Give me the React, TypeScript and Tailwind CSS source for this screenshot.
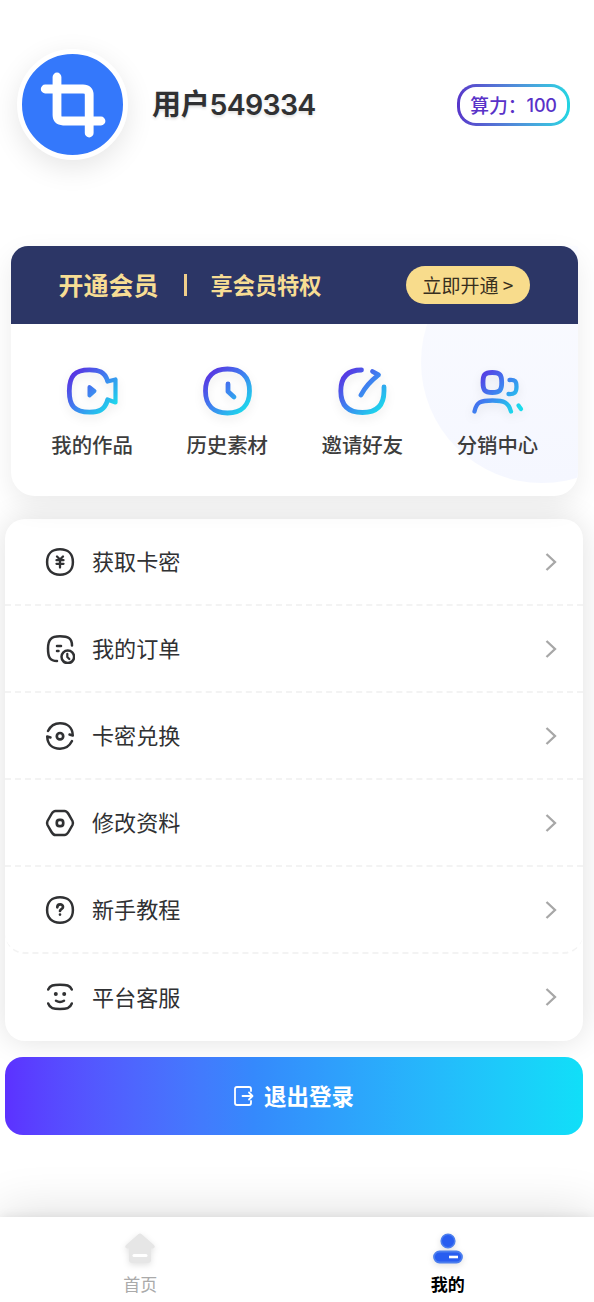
import type { ReactNode } from "react";

const cjk = "font-['Noto_Sans_CJK_SC',sans-serif]";

function Gradient({ id }: { id: string }) {
  return (
    <defs>
      <linearGradient id={id} gradientUnits="userSpaceOnUse" x1="6" y1="6" x2="46" y2="46">
        <stop offset="0" stopColor="#5b2be0" />
        <stop offset="0.5" stopColor="#3f80f0" />
        <stop offset="1" stopColor="#1bdcec" />
      </linearGradient>
    </defs>
  );
}

function FeatureIcon({ id, children }: { id: string; children: ReactNode }) {
  return (
    <svg
      className="h-[52px] w-[54px] drop-shadow-[0_4px_5px_rgba(0,0,0,0.08)]"
      viewBox="0 0 54 52"
      fill="none"
      stroke={`url(#${id})`}
      strokeWidth="4.8"
      strokeLinecap="round"
      strokeLinejoin="round"
    >
      <Gradient id={id} />
      {children}
    </svg>
  );
}

const features = [
  {
    label: "我的作品",
    icon: (
      <FeatureIcon id="g-video">
        <path d="M42.500 15.500C39.500 7 34 4.800 24.500 4.800C9.500 4.800 4.300 11 4.300 26C4.300 41 9.500 47.200 24.500 47.200C34 47.200 39.500 45 42.500 35.500" />
        <path d="M42.500 16.500L50.500 14.500V37.500L42.500 34.500" strokeWidth="4.200" />
        <path d="M24.500 22L29.500 26L24.500 30.500Z" fill="url(#g-video)" strokeWidth="4" />
      </FeatureIcon>
    ),
  },
  {
    label: "历史素材",
    icon: (
      <FeatureIcon id="g-clock">
        <path d="M27.500 4C41.500 4 49.500 12 49.500 26C49.500 40 41.500 48 27.500 48C13.500 48 5.500 40 5.500 26C5.500 12 13.500 4 27.500 4Z" />
        <path d="M28 19V26.500L34 32" />
      </FeatureIcon>
    ),
  },
  {
    label: "邀请好友",
    icon: (
      <FeatureIcon id="g-share">
        <path d="M26.500 5C12.500 5 5.800 12 5.800 26C5.800 40 13 47.500 27.500 47.500C42 47.500 49 40 49 26V22" />
        <path d="M37.500 6.500L43.500 9.800C35.500 16 30 22 26 30" />
      </FeatureIcon>
    ),
  },
  {
    label: "分销中心",
    icon: (
      <FeatureIcon id="g-users">
        <path d="M22.300 7.500C30 7.500 31.700 10 31.700 17.500C31.700 25 30 27.500 22.300 27.500C14.500 27.500 13 25 13 17.500C13 10 14.500 7.500 22.300 7.500Z" />
        <path d="M4.500 46.500C6.500 37 10.500 35.500 22.500 35.500C34.500 35.500 38.500 37.500 41 46.500" strokeWidth="4.300" />
        <path d="M39.500 15C45 14.500 46.500 16 46.500 21.800C46.500 28 44 29.500 38.500 29M48.500 40.500L51 44" strokeWidth="4.300" />
      </FeatureIcon>
    ),
  },
];

function MenuIcon({ children }: { children: ReactNode }) {
  return (
    <svg
      className="size-[30px] shrink-0"
      viewBox="0 0 30 30"
      fill="none"
      stroke="#303133"
      strokeWidth="2.5"
      strokeLinecap="round"
      strokeLinejoin="round"
    >
      {children}
    </svg>
  );
}

const squircle = "M15 2.300C23 2.300 27.900 7 27.900 15C27.900 23 23 27.700 15 27.700C7 27.700 2.100 23 2.100 15C2.100 7 7 2.300 15 2.300Z";

const menu = [
  {
    label: "获取卡密",
    icon: (
      <MenuIcon>
        <path d={squircle} />
        <path d="M12 9.500L15 12.500L18 9.500M11.500 13.200H18.500M11.500 16.800H18.500M15 13V20.500" strokeWidth="2.300" />
      </MenuIcon>
    ),
  },
  {
    label: "我的订单",
    icon: (
      <MenuIcon>
        <path d="M27 11.500C27 4.500 23.500 2.300 15 2.300C6 2.300 3 5.500 3 14.500C3 23.500 5 27 12 27M12 12H16M12 17H13.500" />
        <circle cx="22.800" cy="22.800" r="6.300" />
        <path d="M22.300 19.800V23L24.300 25" strokeWidth="2.200" />
      </MenuIcon>
    ),
  },
  {
    label: "卡密兑换",
    icon: (
      <MenuIcon>
        <path d="M3 10C5.500 5 9 2.300 15 2.300C22.500 2.300 27.500 6.500 27.800 14.500L24.500 13.500M27 20C24.500 25 21 27.700 15 27.700C7.500 27.700 2.500 23.500 2.200 15.500L5.500 16.500" />
        <circle cx="15" cy="15.200" r="3.200" strokeWidth="2.700" />
      </MenuIcon>
    ),
  },
  {
    label: "修改资料",
    icon: (
      <MenuIcon>
        <path d="M10.500 3H19.500C21.500 3 22.500 4.300 23.500 6L27.500 13C28.200 14.500 28.200 15.500 27.500 17L23.500 24C22.500 25.700 21.500 27 19.500 27H10.500C8.500 27 7.500 25.700 6.500 24L2.500 17C1.800 15.500 1.800 14.500 2.500 13L6.500 6C7.500 4.300 8.500 3 10.500 3Z" />
        <rect x="11.800" y="11.800" width="6.400" height="6.400" rx="2.600" strokeWidth="2.700" />
      </MenuIcon>
    ),
  },
  {
    label: "新手教程",
    icon: (
      <MenuIcon>
        <path d={squircle} />
        <path d="M12.300 12.300C12.300 8.500 18 8.500 18 12C18 14.300 15 14 15 16M15 19.500V19.600" strokeWidth="2.700" />
      </MenuIcon>
    ),
  },
  {
    label: "平台客服",
    icon: (
      <MenuIcon>
        <path d="M3.200 7.500C5 3.200 8.500 2.700 15 2.700C21.500 2.700 25 3.200 26.800 7.500M3.200 21.500C5 26.500 8.500 27 15 27C21.500 27 25 26.500 26.800 21.500M11 18.700Q15 21.200 19 18.700" />
        <path d="M10.800 11.900V12M19.200 11.900V12" strokeWidth="4" />
      </MenuIcon>
    ),
  },
];

function Header() {
  return (
    <header className="flex h-[246px] items-start pl-[17px] pr-6 pt-[49px]">
      <div className="flex size-[111px] items-center justify-center rounded-full border-[5px] border-white bg-[#3478fb] shadow-[0_8px_28px_rgba(0,0,0,0.1)]">
        <svg className="size-[70px]" viewBox="0 0 70 70" fill="none" stroke="#fff" strokeWidth="8.8" strokeLinecap="round" strokeLinejoin="round">
          <path d="M19 7V45Q19 51 25 51H63M7.200 19H45Q51.200 19 51.200 25V63" />
        </svg>
      </div>
      <h1 className="ml-6 mt-9 font-['Inter','Noto_Sans_CJK_SC',sans-serif] text-[29px] leading-10 font-semibold tracking-[-0.2px] text-[#303133] [text-shadow:0_2px_3px_rgba(0,0,0,0.12)]">
        用户<span className="text-[28.500px] tracking-[-0.750px]">549334</span>
      </h1>
      <div className="ml-auto mt-[35px] h-[42px] w-[113px] rounded-[19px] bg-linear-to-r from-[#5735ca] to-[#20d5e2] p-[3px]">
        <div className="flex h-full items-center justify-center rounded-[16px] bg-white text-[18.800px] font-medium whitespace-nowrap text-[#5932c8]">
          算力：<span className="font-['Inter',sans-serif] text-[18px] tracking-[-0.200px]">100</span>
        </div>
      </div>
    </header>
  );
}

function MemberCard() {
  return (
    <section className="relative z-10 mr-4 ml-[10.500px] h-[250px] rounded-t-[17px] rounded-b-[24px] bg-white shadow-[0_10px_28px_rgba(0,0,0,0.08)]">
      <div className="absolute inset-0 overflow-hidden rounded-b-[24px]">
        <div className="absolute top-[-5px] left-[410px] size-[242px] rounded-full bg-linear-to-b from-[#fafbff] to-[#f5f7ff]" />
      </div>
      <div className="relative flex h-[78px] items-center rounded-t-[17px] bg-[#2c3666] pr-12 pl-12 text-[#f7dd94]">
        <span className="-mt-[3px] text-[25px] leading-8 font-bold">开通会员</span>
        <span className="ml-[25px] h-[22px] w-[3px] bg-[#f0cf8b]" />
        <span className="-mt-[3px] ml-6 text-[22.200px] leading-8 font-bold">享会员特权</span>
        <button className="ml-auto flex h-[38px] w-[124px] items-center justify-center rounded-full bg-[#f8dc8c] text-[19px] whitespace-nowrap text-[#382f1e]">
          立即开通 &gt;
        </button>
      </div>
      <div className="relative grid grid-cols-4 pr-[13px] pl-[14px] pt-[41px]">
        {features.map((f) => (
          <div key={f.label} className="flex flex-col items-center">
            {f.icon}
            <span className="mt-3 text-[20.400px] leading-[30px] font-medium text-[#3d3d3d]">{f.label}</span>
          </div>
        ))}
      </div>
    </section>
  );
}

function Menu() {
  return (
    <nav className="mr-[11px] ml-[5px] mt-[23px] h-[522px] rounded-[20px] bg-white shadow-[0_0_30px_rgba(0,0,0,0.12)]">
      {menu.map((item, i) => (
        <div
          key={item.label}
          className={
            i === 5
              ? "flex h-[86px] items-center pr-[26px] pl-10"
              : i === 4
                ? "flex h-[87px] items-center rounded-b-[20px] border-b-2 border-dashed border-[#f3f3f3] pr-[26px] pl-10"
                : "flex h-[87px] items-center border-b-2 border-dashed border-[#f3f3f3] pr-[26px] pl-10"
          }
        >
          {item.icon}
          <span className="-mt-[3px] ml-[17px] text-[22.100px] leading-[30px] text-[#303133]">{item.label}</span>
          <svg className="ml-auto h-[18px] w-3" viewBox="0 0 12 18" fill="none" stroke="#a7a7a7" strokeWidth="2.300">
            <path d="M1.500 1L10 9L1.500 17" />
          </svg>
        </div>
      ))}
    </nav>
  );
}

function TabBar() {
  return (
    <footer className="relative mt-auto grid h-[85px] grid-cols-2 bg-white pr-[5px] shadow-[0_-1px_10px_rgba(0,0,0,0.08),0_-6px_50px_rgba(0,0,0,0.12)]">
      <div className="flex flex-col items-center pt-3 pr-[14px] text-[17px] leading-[24px] text-[#aaaaaa]">
        <svg className="h-10 w-[34px] drop-shadow-[0_2px_3px_rgba(0,0,0,0.12)]" viewBox="0 0 34 40">
          <path d="M15 5.500Q17 3.500 19 5.500L31 16Q33 18.500 30 19.500H28V31Q28 34 25 34H9Q6 34 6 31V19.500H4Q1 18.500 3 16Z" fill="#e6e6e6" />
          <path d="M11 26.500H23" stroke="#fff" strokeWidth="3" strokeLinecap="round" />
        </svg>
        <span className="mt-[3px]">首页</span>
      </div>
      <div className="flex flex-col items-center pt-3 pl-[12px] text-[17px] leading-[24px] font-bold text-black">
        <svg className="h-10 w-[34px] drop-shadow-[0_2px_3px_rgba(0,0,0,0.12)]" viewBox="0 0 34 40">
          <circle cx="17" cy="12" r="6.800" fill="#285df0" stroke="#4c7fee" strokeWidth="1.600" />
          <rect x="3" y="22.500" width="28" height="11" rx="5.500" fill="#285df0" stroke="#4c7fee" strokeWidth="1.800" />
          <path d="M18 28H27" stroke="#fff" strokeWidth="2.600" />
        </svg>
        <span className="mt-[3px]">我的</span>
      </div>
    </footer>
  );
}

export default function App() {
  return (
    <main className={`${cjk} flex h-[1302px] w-[594px] flex-col overflow-hidden bg-white`}>
      <Header />
      <MemberCard />
      <Menu />
      <button className="relative z-10 mr-[11px] ml-[5px] mt-4 flex h-[78px] shrink-0 items-center justify-center gap-[10px] rounded-[18px] bg-linear-to-r from-[#5c31ff] via-[#3589fc] via-[43%] to-[#10dff8] text-[22.500px] font-bold text-white">
        <svg className="size-5" viewBox="0 0 20 20" fill="none" stroke="currentColor" strokeWidth="1.800" strokeLinecap="round" strokeLinejoin="round">
          <path d="M17 5V3Q17 1 15 1H3Q1 1 1 3V17Q1 19 3 19H15Q17 19 17 17V15M8.500 10H18M15 6.500L18.500 10L15 13.500" />
        </svg>
        <span>退出登录</span>
      </button>
      <TabBar />
    </main>
  );
}
